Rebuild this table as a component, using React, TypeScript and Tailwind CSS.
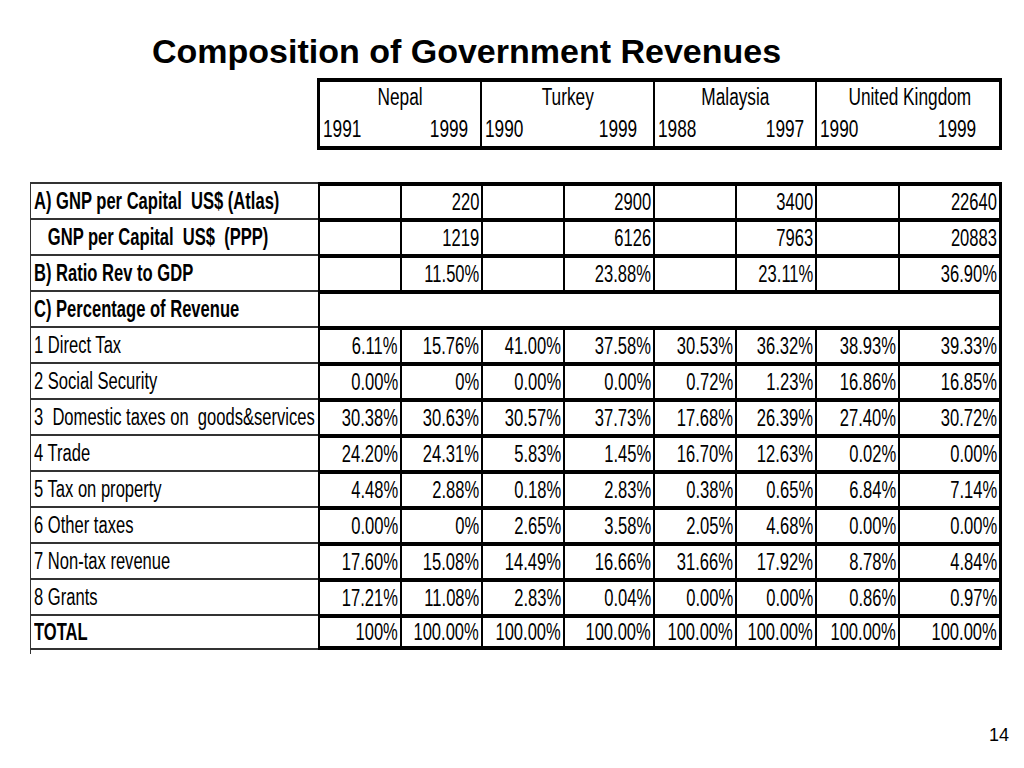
const widths = ["w-[84px]", "w-[81px]", "w-[82px]", "w-[90px]", "w-[82px]", "w-[80px]", "w-[83px]", "w-[102px]"];

const countries = [
  { name: "Nepal", from: "1991", to: "1999", w: "w-[165px]", pr: "pr-[12px]" },
  { name: "Turkey", from: "1990", to: "1999", w: "w-[173px]", pr: "pr-[16px]" },
  { name: "Malaysia", from: "1988", to: "1997", w: "w-[162px]", pr: "pr-[11px]" },
  { name: "United Kingdom", from: "1990", to: "1999", w: "w-[185px]", pr: "pr-[26px]" },
];

type Row = { label: string; bold?: boolean; values?: string[] };

const rows: Row[] = [
  { label: "A) GNP per Capital  US$ (Atlas)", bold: true, values: ["", "220", "", "2900", "", "3400", "", "22640"] },
  { label: "   GNP per Capital  US$  (PPP)", bold: true, values: ["", "1219", "", "6126", "", "7963", "", "20883"] },
  { label: "B) Ratio Rev to GDP", bold: true, values: ["", "11.50%", "", "23.88%", "", "23.11%", "", "36.90%"] },
  { label: "C) Percentage of Revenue", bold: true },
  { label: "1 Direct Tax", values: ["6.11%", "15.76%", "41.00%", "37.58%", "30.53%", "36.32%", "38.93%", "39.33%"] },
  { label: "2 Social Security", values: ["0.00%", "0%", "0.00%", "0.00%", "0.72%", "1.23%", "16.86%", "16.85%"] },
  { label: "3  Domestic taxes on  goods&services", values: ["30.38%", "30.63%", "30.57%", "37.73%", "17.68%", "26.39%", "27.40%", "30.72%"] },
  { label: "4 Trade", values: ["24.20%", "24.31%", "5.83%", "1.45%", "16.70%", "12.63%", "0.02%", "0.00%"] },
  { label: "5 Tax on property", values: ["4.48%", "2.88%", "0.18%", "2.83%", "0.38%", "0.65%", "6.84%", "7.14%"] },
  { label: "6 Other taxes", values: ["0.00%", "0%", "2.65%", "3.58%", "2.05%", "4.68%", "0.00%", "0.00%"] },
  { label: "7 Non-tax revenue", values: ["17.60%", "15.08%", "14.49%", "16.66%", "31.66%", "17.92%", "8.78%", "4.84%"] },
  { label: "8 Grants", values: ["17.21%", "11.08%", "2.83%", "0.04%", "0.00%", "0.00%", "0.86%", "0.97%"] },
  { label: "TOTAL", bold: true, values: ["100%", "100.00%", "100.00%", "100.00%", "100.00%", "100.00%", "100.00%", "100.00%"] },
];

// Arial Narrow isn't installed, so Liberation Sans is squeezed horizontally
const Narrow = ({
  children,
  origin,
  tight,
}: {
  children: React.ReactNode;
  origin: "left" | "right" | "center";
  tight?: boolean;
}) => (
  <span
    className={`inline-block whitespace-pre ${tight ? "scale-x-[0.72]" : "scale-x-[0.75]"} ${
      origin === "left" ? "origin-left" : origin === "right" ? "origin-right" : "origin-center"
    }`}
  >
    {children}
  </span>
);

export default function App() {
  return (
    <div className="w-[1024px] h-[768px] bg-white text-black flex flex-col relative overflow-hidden font-['Liberation_Sans',Arial,sans-serif]">
      {/* Title */}
      <h1 className="pl-[152px] pt-[31px] text-[34px] leading-[40px] font-bold">
        Composition of Government Revenues
      </h1>

      {/* Country / year header */}
      <div className="ml-[317px] mt-[7px] w-[685px] h-[72px] border-y-4 border-x-[3px] border-black flex text-[23px]">
        {countries.map((c, i) => (
          <div
            key={c.name}
            className={`${c.w} flex flex-col ${i === 0 ? "-ml-[3px] border-l-[3px]" : ""} ${i < 3 ? "border-r-2" : "-mr-[3px]"} border-black`}
          >
            <div className="h-[28px] flex items-end justify-center leading-[26px]">
              <Narrow origin="center">{c.name}</Narrow>
            </div>
            <div className={`flex justify-between pl-[3px] ${c.pr} pt-[2px] leading-[34px]`}>
              <Narrow origin="left">{c.from}</Narrow>
              <Narrow origin="right">{c.to}</Narrow>
            </div>
          </div>
        ))}
      </div>

      {/* Main table */}
      <div className="ml-[30px] mt-[32px] w-[972px] flex flex-col text-[23px]">
        {rows.map((r, ri) => {
          const last = ri === rows.length - 1;
          return (
            <div key={ri} className="flex h-[36px]">
              <div
                className={`w-[288px] border-l border-t-2 border-[#333] ${last ? "border-b-2" : ""} pl-[3px] flex items-center ${r.bold ? "font-bold" : ""}`}
              >
                <Narrow origin="left" tight>
                  {r.label}
                </Narrow>
              </div>
              <div className={`flex flex-1 border-t-4 border-black ${last ? "border-b-4" : ""}`}>
                {r.values ? (
                  r.values.map((v, ci) => (
                    <div
                      key={ci}
                      className={`${widths[ci]} ${ci === 0 ? "border-l-2" : ""} ${ci === 7 ? "border-r-[3px]" : "border-r-2"} border-black flex items-center justify-end pr-[2px]`}
                    >
                      {v && (
                        <Narrow origin="right" tight>
                          {v}
                        </Narrow>
                      )}
                    </div>
                  ))
                ) : (
                  <div className="flex-1 border-l-2 border-r-[3px] border-black" />
                )}
              </div>
            </div>
          );
        })}
        {/* the thin left rule runs a little past the last row */}
        <div className="w-px h-[4px] bg-[#333]" />
      </div>

      {/* Page number */}
      <div className="absolute left-[989px] top-[722px] text-[18px]">14</div>
    </div>
  );
}
